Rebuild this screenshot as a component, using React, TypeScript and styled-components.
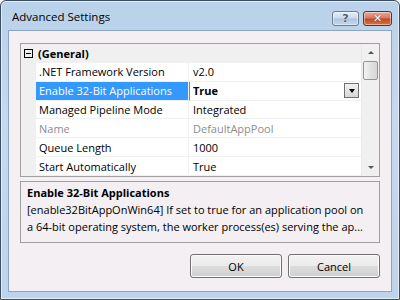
import styled, { createGlobalStyle } from "styled-components";

const Global = createGlobalStyle`
    html, body { margin: 0; padding: 0; }
    body {
        width: 400px;
        height: 300px;
        overflow: hidden;
        font-family: "Open Sans", "Noto Sans", sans-serif;
        font-size: 11px;
        background: #ffffff;
    }
`;

const Window = styled.div`
    width: 400px;
    height: 300px;
    box-sizing: border-box;
    border: 1px solid #3c4e62;
    border-radius: 6px 6px 0 0;
    background: linear-gradient(to bottom, #b9d1ea 0%, #c5d9ef 40%, #bed3ec 100%);
    display: flex;
    flex-direction: column;
    padding: 0 7px 7px 7px;
    box-shadow: inset 0 0 0 1px #e4eef9;
`;

const TitleBar = styled.div`
    height: 29px;
    display: flex;
    align-items: flex-start;
    padding-left: 4px;
`;

const Title = styled.span`
    flex: 1;
    color: #000;
    font-size: 11.5px;
    margin-top: 8px;
`;

const CaptionButton = styled.div<{ close?: boolean }>`
    width: ${p => (p.close ? "27px" : "25px")};
    height: 13px;
    margin-left: 4px;
    margin-top: 10px;
    border: 1px solid ${p => (p.close ? "#6d2a1e" : "#6a7d93")};
    border-radius: 3px;
    background: ${p => p.close
        ? "linear-gradient(to bottom, #e9a99a 0%, #d47a63 45%, #c04a2c 55%, #d7743c 100%)"
        : "linear-gradient(to bottom, #e6eef8 0%, #cbdaec 45%, #aec4df 55%, #c6d8ee 100%)"};
    display: flex;
    align-items: center;
    justify-content: center;
    color: ${p => (p.close ? "#fff" : "#4a5d78")};
    font-family: "DejaVu Sans", sans-serif;
    font-weight: bold;
    font-size: 11px;
    text-shadow: ${p => (p.close ? "0 0 1px #333" : "0 0 1px #fff")};
    box-shadow: inset 0 0 0 1px rgba(255,255,255,.45);
`;

const Client = styled.div`
    flex: 1;
    background: #f3eff2;
    border: 1px solid #8aa4c2;
    display: flex;
    flex-direction: column;
    padding: 12px 11px 13px 11px;
`;

const Grid = styled.div`
    height: 134px;
    border: 1px solid #a0a0a0;
    background: #fff;
    display: flex;
    box-sizing: border-box;
`;

const Rows = styled.div`
    flex: 1;
    display: flex;
    flex-direction: column;
`;

const CategoryRow = styled.div`
    height: 18px;
    background: #f0f0f0;
    display: flex;
    align-items: center;
    font-weight: bold;
    padding-top: 1px;
`;

const Expander = styled.span`
    width: 9px;
    height: 9px;
    box-sizing: border-box;
    border: 1px solid #000;
    margin: 0 5px 0 3px;
    position: relative;
    &::after {
        content: "";
        position: absolute;
        left: 1px;
        top: 3px;
        width: 5px;
        height: 1px;
        background: #000;
    }
`;

const Row = styled.div`
    height: 19px;
    display: flex;
    border-left: 15px solid #f0f0f0;
`;

const NameCell = styled.div<{ selected?: boolean; disabled?: boolean }>`
    width: 153px;
    box-sizing: border-box;
    padding-left: 3px;
    display: flex;
    align-items: center;
    border-bottom: 1px solid #f0f0f0;
    border-right: 1px solid #f0f0f0;
    background: ${p => (p.selected ? "#3399ff" : "#fff")};
    color: ${p => (p.selected ? "#fff" : p.disabled ? "#8d8d8d" : "#000")};
    white-space: nowrap;
`;

const ValueCell = styled.div<{ bold?: boolean; disabled?: boolean; selected?: boolean }>`
    flex: 1;
    padding-left: 3px;
    display: flex;
    align-items: center;
    border-bottom: 1px solid #f0f0f0;
    border-left: 1px solid ${p => (p.selected ? "#3399ff" : "#fff")};
    font-weight: ${p => (p.bold ? "bold" : "normal")};
    color: ${p => (p.disabled ? "#8d8d8d" : "#000")};
    white-space: nowrap;
`;

const ValueText = styled.span`
    flex: 1;
`;

const DropButton = styled.div`
    width: 15px;
    height: 15px;
    margin-right: 2px;
    border: 1px solid #707070;
    box-sizing: border-box;
    background: linear-gradient(to bottom, #f2f2f2, #d6d6d6);
    display: flex;
    align-items: center;
    justify-content: center;
    &::after {
        content: "";
        border-left: 3px solid transparent;
        border-right: 3px solid transparent;
        border-top: 4px solid #000;
    }
`;

const ScrollBar = styled.div`
    width: 17px;
    background: #f0f0f0;
    border-left: 1px solid #e8e8e8;
    display: flex;
    flex-direction: column;
    align-items: center;
`;

const Arrow = styled.div<{ up?: boolean }>`
    height: 17px;
    display: flex;
    align-items: center;
    justify-content: center;
    &::after {
        content: "";
        border-left: 3px solid transparent;
        border-right: 3px solid transparent;
        ${p => (p.up ? "border-bottom: 3px solid #555;" : "border-top: 3px solid #555;")}
    }
`;

const Thumb = styled.div`
    width: 15px;
    height: 19px;
    box-sizing: border-box;
    border: 1px solid #959595;
    border-radius: 2px;
    background: linear-gradient(to right, #f3f3f3, #e2e2e2 50%, #d6d6d6);
`;

const Track = styled.div`
    flex: 1;
`;

const Description = styled.div`
    margin-top: 4px;
    height: 62px;
    box-sizing: border-box;
    border: 1px solid #a0a0a0;
    padding: 2px 6px;
    line-height: 17px;
    white-space: nowrap;
    overflow: hidden;
`;

const DescTitle = styled.div`
    font-weight: bold;
`;

const Buttons = styled.div`
    margin-top: auto;
    display: flex;
    justify-content: flex-end;
    gap: 6px;
`;

const Button = styled.button`
    width: 92px;
    height: 24px;
    font-family: inherit;
    font-size: 11px;
    border: 1px solid #707070;
    border-radius: 3px;
    background: linear-gradient(to bottom, #f2f2f2 0%, #ebebeb 50%, #dddddd 51%, #cfcfcf 100%);
    box-shadow: inset 0 0 0 1px #fcfcfc;
    color: #000;
    padding: 0;
`;

const rows = [
    { name: ".NET Framework Version", value: "v2.0" },
    { name: "Enable 32-Bit Applications", value: "True", selected: true },
    { name: "Managed Pipeline Mode", value: "Integrated" },
    { name: "Name", value: "DefaultAppPool", disabled: true },
    { name: "Queue Length", value: "1000" },
    { name: "Start Automatically", value: "True" },
];

export default function App() {
    return <>
        <Global />
        <Window>
            <TitleBar>
                <Title>Advanced Settings</Title>
                <CaptionButton>?</CaptionButton>
                <CaptionButton close>✕</CaptionButton>
            </TitleBar>
            <Client>
                <Grid>
                    <Rows>
                        <CategoryRow><Expander />(General)</CategoryRow>
                        {rows.map(r => (
                            <Row key={r.name}>
                                <NameCell selected={r.selected} disabled={r.disabled}>{r.name}</NameCell>
                                <ValueCell bold={r.selected} disabled={r.disabled} selected={r.selected}>
                                    <ValueText>{r.value}</ValueText>
                                    {r.selected && <DropButton />}
                                </ValueCell>
                            </Row>
                        ))}
                    </Rows>
                    <ScrollBar>
                        <Arrow up />
                        <Thumb />
                        <Track />
                        <Arrow />
                    </ScrollBar>
                </Grid>
                <Description>
                    <DescTitle>Enable 32-Bit Applications</DescTitle>
                    <div>[enable32BitAppOnWin64] If set to true for an application pool on</div>
                    <div>a 64-bit operating system, the worker process(es) serving the ap...</div>
                </Description>
                <Buttons>
                    <Button>OK</Button>
                    <Button>Cancel</Button>
                </Buttons>
            </Client>
        </Window>
    </>;
}
